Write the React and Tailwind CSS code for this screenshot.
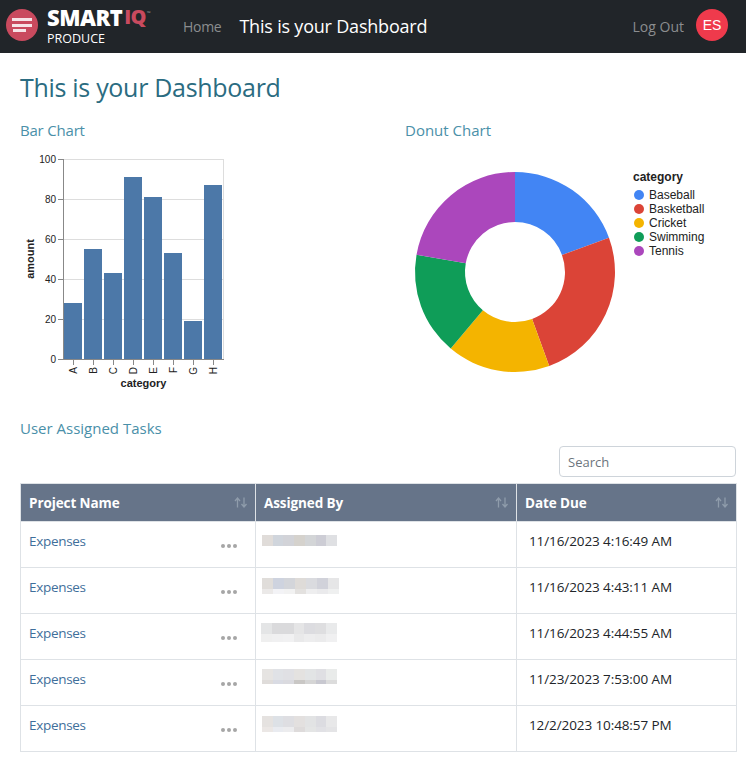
const bars = [
  ['A', 28],
  ['B', 55],
  ['C', 43],
  ['D', 91],
  ['E', 81],
  ['F', 53],
  ['G', 19],
  ['H', 87],
];

const slices = [
  { name: 'Baseball', color: '#4285f4', from: 0, to: 70 },
  { name: 'Basketball', color: '#db4437', from: 70, to: 160 },
  { name: 'Cricket', color: '#f4b400', from: 160, to: 220 },
  { name: 'Swimming', color: '#0f9d58', from: 220, to: 280 },
  { name: 'Tennis', color: '#ab47bc', from: 280, to: 360 },
];

const rows = [
  {
    date: '11/16/2023 4:16:49 AM',
    mt: 'mt-[3px]',
    ml: 'ml-[6px]',
    w: 'w-[75px]',
    blur: [['#e0dcd9', '#d0d5dc', '#d2d3d8', '#d5d2cd', '#d3d5d7', '#cdcdd5', '#dfe0e3']],
    h: ['h-[11px]'],
  },
  {
    date: '11/16/2023 4:43:11 AM',
    mt: 'mt-[0px]',
    ml: 'ml-[6px]',
    w: 'w-[77px]',
    blur: [
      ['#e0ddda', '#ced3df', '#d3d5da', '#dedbd8', '#dadbdf', '#d1d2da', '#e6e6e7'],
      ['#ebe9e8', '#f3f3f6', '#f2f2f2', '#e3e1df', '#eeeeef', '#eaeaec', '#eff0f0'],
    ],
    h: ['h-[11px]', 'h-[5px]'],
  },
  {
    date: '11/16/2023 4:44:55 AM',
    mt: 'mt-[-1px]',
    ml: 'ml-[5px]',
    w: 'w-[76px]',
    blur: [
      ['#e4e5e6', '#dadadc', '#dadadc', '#e5e5e6', '#dcdce0', '#dedee0', '#e9eaeb'],
      ['#efefef', '#f0f0f1', '#f1f1f2', '#e9e9ea', '#ededee', '#ebebec', '#f0f0f1'],
    ],
    h: ['h-[11px]', 'h-[8px]'],
  },
  {
    date: '11/23/2023 7:53:00 AM',
    mt: 'mt-[-1px]',
    ml: 'ml-[6px]',
    w: 'w-[75px]',
    blur: [
      ['#e6e4e2', '#e0e2e6', '#e0e0e4', '#e4e2e0', '#e2e4e5', '#dfdfe3', '#e9ebea'],
      ['#dfdcda', '#d9dbe3', '#dadadf', '#c9c7c5', '#d5d5d5', '#c8c8d0', '#dcdcdc'],
    ],
    h: ['h-[11px]', 'h-[4px]'],
  },
  {
    date: '12/2/2023 10:48:57 PM',
    mt: 'mt-[0px]',
    ml: 'ml-[6px]',
    w: 'w-[75px]',
    blur: [
      ['#e5e2e0', '#dde1e6', '#dedee2', '#e3e0df', '#e2e3e4', '#dcdce1', '#e8e8e9'],
      ['#ebe7e5', '#e9ebf0', '#ececee', '#dedbdb', '#e4e5e5', '#e1e1e5', '#e4e4e6'],
    ],
    h: ['h-[11px]', 'h-[5px]'],
  },
];

const point = (r, deg) => {
  const a = (deg * Math.PI) / 180;
  return `${515 + r * Math.sin(a)} ${272 - r * Math.cos(a)}`;
};

const slicePath = (from, to) => {
  const large = to - from > 180 ? 1 : 0;
  return `M${point(100, from)} A100 100 0 ${large} 1 ${point(100, to)} L${point(50, to)} A50 50 0 ${large} 0 ${point(50, from)} Z`;
};

const BarChart = () => (
  <svg width="220" height="245" viewBox="20 150 220 245" className="block">
    <g stroke="#ddd">
      {[0, 20, 40, 60, 80, 100].map((v) => (
        <line key={v} x1="63" x2="223" y1={359.5 - v * 2} y2={359.5 - v * 2} />
      ))}
      <line x1="223.5" x2="223.5" y1="159" y2="360" />
    </g>
    {bars.map(([name, v], i) => (
      <rect key={name} x={64 + i * 20} y={359 - v * 2} width="18" height={v * 2} fill="#4c78a8" />
    ))}
    <g stroke="#888">
      <line x1="63.5" x2="63.5" y1="159" y2="360" />
      <line x1="63" x2="224" y1="359.5" y2="359.5" />
      {[0, 20, 40, 60, 80, 100].map((v) => (
        <line key={v} x1="58" x2="63" y1={359.5 - v * 2} y2={359.5 - v * 2} />
      ))}
      {bars.map(([name], i) => (
        <line key={name} x1={73.5 + i * 20} x2={73.5 + i * 20} y1="360" y2="365" />
      ))}
    </g>
    <g fontFamily="Liberation Sans, sans-serif" fontSize="10" fill="#222">
      {[0, 20, 40, 60, 80, 100].map((v) => (
        <text key={v} x="56" y={363 - v * 2} textAnchor="end">
          {v}
        </text>
      ))}
      {bars.map(([name], i) => (
        <text
          key={name}
          textAnchor="end"
          transform={`translate(${76.5 + i * 20} 367) rotate(-90)`}
        >
          {name}
        </text>
      ))}
      <text x="143.5" y="387" textAnchor="middle" fontSize="11" fontWeight="700">
        category
      </text>
      <text
        transform="translate(33.5 259) rotate(-90)"
        textAnchor="middle"
        fontSize="11"
        fontWeight="700"
      >
        amount
      </text>
    </g>
  </svg>
);

const DonutChart = () => (
  <svg width="330" height="240" viewBox="405 150 330 240" className="block">
    {slices.map((s) => (
      <path key={s.name} d={slicePath(s.from, s.to)} fill={s.color} />
    ))}
    <g fontFamily="Liberation Sans, sans-serif" fontSize="12" fill="#222">
      <text x="633" y="181" fontWeight="700">
        category
      </text>
      {slices.map((s, i) => (
        <g key={s.name}>
          <circle cx="639" cy={195 + i * 14} r="5" fill={s.color} />
          <text x="649" y={199 + i * 14}>
            {s.name}
          </text>
        </g>
      ))}
    </g>
  </svg>
);

const SortIcon = () => (
  <svg width="14" height="11" viewBox="0 0 14 11" fill="none" stroke="#8f9cab" strokeWidth="1.3">
    <path d="M3.5 10.5V1.5M1 4l2.5-3L6 4" />
    <path d="M10 .5v9M7.5 7l2.5 3 2.5-3" />
  </svg>
);

const Blur = ({ row }) => (
  <div className={`flex flex-col ${row.w} ${row.mt} ${row.ml}`}>
    {row.blur.map((line, i) => (
      <div key={i} className={`flex ${row.h[i]}`}>
        {line.map((c, j) => (
          <div key={j} className="flex-1" style={{ backgroundColor: c }} />
        ))}
      </div>
    ))}
  </div>
);

const Head = ({ title }) => (
  <th className="border border-[#dee2e6] bg-[#667489] p-0">
    <div className="flex h-[37px] items-center justify-between pl-[8px] pr-[7px] text-[13.5px] font-bold tracking-[-0.1px] text-white">
      <span className="pt-[1px]">{title}</span>
      <SortIcon />
    </div>
  </th>
);

export default function App() {
  return (
    <div className="min-h-[765px] bg-white font-['Open_Sans',sans-serif] text-[#212529]">
      <nav className="flex h-[53px] items-center bg-[#212529] pl-[6px] pr-[18px]">
        <div className="mt-[-3px] flex h-[32px] w-[32px] flex-col items-center justify-center gap-[2.5px] rounded-full bg-[#c94a5e]">
          <div className="h-[3px] w-[20px] bg-[#f6e4e7]" />
          <div className="h-[3px] w-[20px] bg-[#f6e4e7]" />
          <div className="ml-[7px] h-[3px] w-[13px] self-start bg-[#f6e4e7]" />
        </div>
        <div className="ml-[9px] mt-[1px] flex w-[136px] flex-col">
          <div className="flex h-[16px] items-start text-[22px] font-extrabold leading-[16px] tracking-[-0.5px] text-white">
            <span>SMART</span>
            <span className="ml-[2px] text-[20px] tracking-[-0.8px] text-[#c94a5e]">IQ</span>
            <span className="ml-[1px] text-[5px] font-normal leading-[8px] text-[#999]">™</span>
          </div>
          <div className="mt-[7px] text-[12.5px] leading-[14px] text-white">PRODUCE</div>
        </div>
        <span className="text-[14px] tracking-[-0.3px] text-[#8b8d8f]">Home</span>
        <span className="ml-[18px] text-[18px] tracking-[-0.2px] text-white">This is your Dashboard</span>
        <span className="ml-auto text-[14px] text-[#8b8d8f]">Log Out</span>
        <div className="ml-[12px] mt-[-3px] flex h-[32px] w-[32px] items-center justify-center rounded-full bg-[#ef3a4c] font-['Liberation_Sans',sans-serif] text-[14px] text-white">
          ES
        </div>
      </nav>

      <main className="pl-[20px] pr-[10px]">
        <h1 className="pt-[15px] text-[25px] leading-[38px] tracking-[-0.3px] text-[#2b6c81]">
          This is your Dashboard
        </h1>
        <div className="mt-[13px] flex">
          <div className="w-[385px] shrink-0">
            <h2 className="mb-[9px] text-[15px] leading-[22px] tracking-[-0.2px] text-[#4a90a9]">Bar Chart</h2>
            <BarChart />
          </div>
          <div>
            <h2 className="mb-[9px] text-[15px] leading-[22px] text-[#4a90a9]">Donut Chart</h2>
            <DonutChart />
          </div>
        </div>
        <h2 className="mt-[22px] text-[15px] leading-[22px] text-[#4a90a9]">User Assigned Tasks</h2>
        <div className="mt-[7px] flex justify-end">
          <div className="flex h-[31px] w-[177px] items-center rounded-[4px] border border-[#ced4da] pl-[8px] pt-[2px] text-[13px] text-[#6c757d]">
            Search
          </div>
        </div>
        <table className="mt-[6px] w-[716px] table-fixed border-collapse">
          <colgroup>
            <col className="w-[235px]" />
            <col className="w-[261px]" />
            <col className="w-[220px]" />
          </colgroup>
          <thead>
            <tr>
              <Head title="Project Name" />
              <Head title="Assigned By" />
              <Head title="Date Due" />
            </tr>
          </thead>
          <tbody>
            {rows.map((row) => (
              <tr key={row.date}>
                <td className="border border-[#dee2e6] p-0 align-top">
                  <div className="flex h-[45px] items-start justify-between pl-[8px] pr-[18px] pt-[9px]">
                    <span className="text-[13.5px] leading-[20px] tracking-[-0.3px] text-[#3f6f9b]">Expenses</span>
                    <div className="mt-[13px] flex gap-[2px]">
                      <div className="h-[4px] w-[4px] rounded-full bg-[#a6a6a6]" />
                      <div className="h-[4px] w-[4px] rounded-full bg-[#a6a6a6]" />
                      <div className="h-[4px] w-[4px] rounded-full bg-[#a6a6a6]" />
                    </div>
                  </div>
                </td>
                <td className="border border-[#dee2e6] p-0 align-top">
                  <div className="h-[45px] pt-[10px]">
                    <Blur row={row} />
                  </div>
                </td>
                <td className="border border-[#dee2e6] p-0 align-top">
                  <div className="h-[45px] pl-[12px] pt-[9px] text-[13.5px] leading-[20px] tracking-[-0.1px]">
                    {row.date}
                  </div>
                </td>
              </tr>
            ))}
          </tbody>
        </table>
      </main>
    </div>
  );
}
